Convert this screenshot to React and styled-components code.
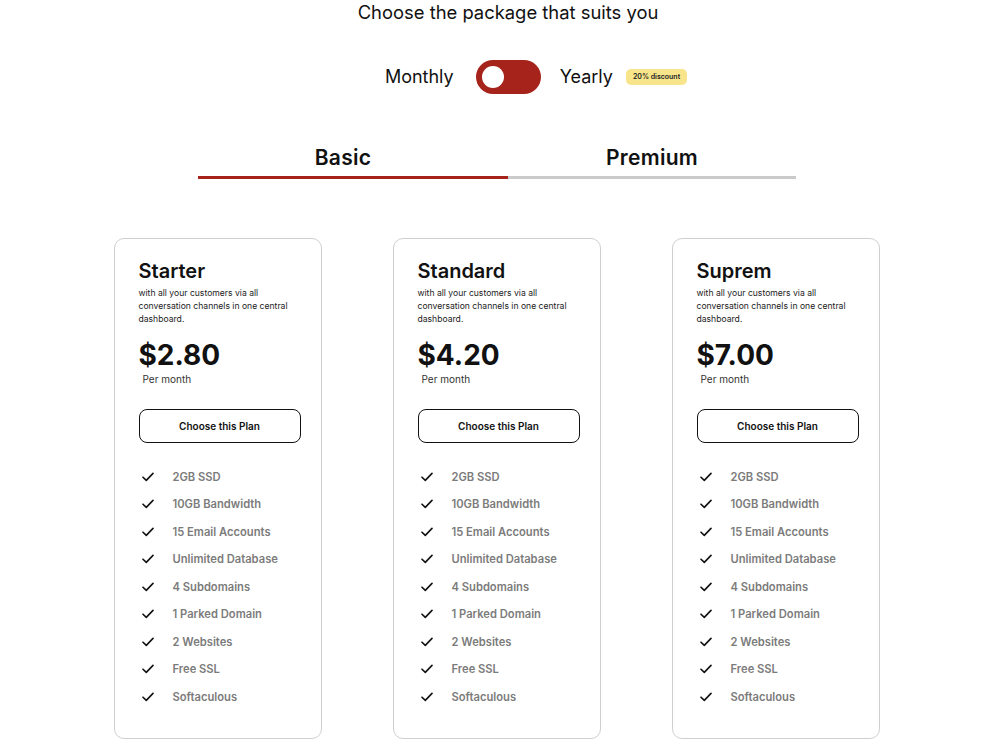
import React, { useState } from 'react'
import styled, { createGlobalStyle } from 'styled-components'

const GlobalStyle = createGlobalStyle`
  body {
    margin: 0;
    background: #fff;
    font-family: Inter, "Noto Sans", sans-serif;
    color: #111;
  }
`

const plans = [
  { name: 'Starter', price: '$2.80' },
  { name: 'Standard', price: '$4.20' },
  { name: 'Suprem', price: '$7.00' },
]

const features = [
  '2GB SSD',
  '10GB Bandwidth',
  '15 Email Accounts',
  'Unlimited Database',
  '4 Subdomains',
  '1 Parked Domain',
  '2 Websites',
  'Free SSL',
  'Softaculous',
]

const CheckIcon = () => (
  <svg width="12" height="10" viewBox="0 0 12 10" fill="none">
    <path d="M1 5.2 L4.3 8.4 L11 1.4" stroke="#111" strokeWidth="1.6" strokeLinecap="round" strokeLinejoin="round" />
  </svg>
)

const PlanCard = ({ name, price }) => (
  <Card>
    <PlanName>{name}</PlanName>
    <Description>
      with all your customers via all conversation channels in one central dashboard.
    </Description>
    <Price>{price}</Price>
    <Period>Per month</Period>
    <ChooseButton>Choose this Plan</ChooseButton>
    <FeatureList>
      {features.map((f) => (
        <Feature key={f}>
          <CheckIcon />
          <span>{f}</span>
        </Feature>
      ))}
    </FeatureList>
  </Card>
)

const App = () => {
  const [yearly, setYearly] = useState(false)
  const [tab, setTab] = useState('basic')

  return (
    <Page>
      <GlobalStyle />
      <Heading>Choose the package that suits you</Heading>
      <BillingRow>
        <BillingLabel>Monthly</BillingLabel>
        <Switch onClick={() => setYearly(!yearly)} $on={yearly}>
          <Knob $on={yearly} />
        </Switch>
        <BillingLabel>Yearly</BillingLabel>
        <Discount>20% discount</Discount>
      </BillingRow>
      <Tabs>
        <Tab $active={tab === 'basic'} $width={310} $shift={20} onClick={() => setTab('basic')}>
          Basic
        </Tab>
        <Tab $active={tab === 'premium'} $width={288} onClick={() => setTab('premium')}>
          Premium
        </Tab>
      </Tabs>
      <Cards>
        {plans.map((p) => (
          <PlanCard key={p.name} {...p} />
        ))}
      </Cards>
    </Page>
  )
}

export default App

const Page = styled.div`
  display: flex;
  flex-direction: column;
  align-items: center;
  padding-bottom: 40px;
`

const Heading = styled.h1`
  margin: 0;
  padding-left: 16px;
  font-size: 18.4px;
  line-height: 24px;
  font-weight: 400;
  color: #111;
`

const BillingRow = styled.div`
  display: flex;
  align-items: center;
  margin-top: 36px;
  height: 34px;
  padding-left: 72px;
`

const BillingLabel = styled.span`
  font-size: 18px;
  line-height: 24px;
  color: #111;
`

const Switch = styled.button`
  width: 65px;
  height: 34px;
  margin: 0 19px 0 22px;
  border: none;
  border-radius: 17px;
  background: #a5231a;
  padding: 0 6px;
  display: flex;
  align-items: center;
  justify-content: ${(p) => (p.$on ? 'flex-end' : 'flex-start')};
  cursor: pointer;
`

const Knob = styled.span`
  width: 22px;
  height: 22px;
  border-radius: 50%;
  background: #fff;
`

const Discount = styled.span`
  margin-left: 13px;
  height: 16px;
  padding: 0 7px;
  border-radius: 5px;
  background: #f8e58b;
  font-size: 7px;
  font-weight: 600;
  line-height: 16px;
  color: #222;
`

const Tabs = styled.div`
  display: flex;
  margin-top: 51px;
  margin-left: -6px;
`

const Tab = styled.button`
  width: ${(p) => p.$width}px;
  padding: 0 ${(p) => p.$shift || 0}px 5px 0;
  border: none;
  border-bottom: 3px solid ${(p) => (p.$active ? '#a5231a' : '#cacaca')};
  background: none;
  font-family: inherit;
  font-size: 21px;
  line-height: 26px;
  font-weight: 600;
  letter-spacing: 0.3px;
  color: #111;
  cursor: pointer;
`

const Cards = styled.div`
  display: flex;
  gap: 71px;
  margin-top: 59px;
  padding-right: 7px;
`

const Card = styled.div`
  width: 208px;
  box-sizing: border-box;
  padding: 20px 20px 27px 24px;
  border: 1px solid #cfcfcf;
  border-radius: 10px;
  display: flex;
  flex-direction: column;
`

const PlanName = styled.h2`
  margin: 0;
  font-size: 20px;
  line-height: 24px;
  font-weight: 600;
  color: #111;
`

const Description = styled.p`
  margin: 4px 0 0;
  max-width: 160px;
  font-size: 8.6px;
  line-height: 13px;
  color: #222;
`

const Price = styled.div`
  margin-top: 12px;
  font-size: 28px;
  line-height: 34px;
  font-weight: 700;
  color: #111;
`

const Period = styled.div`
  padding-left: 4px;
  font-size: 10px;
  line-height: 14px;
  color: #333;
`

const ChooseButton = styled.button`
  margin-top: 23px;
  height: 34px;
  border: 1.5px solid #111;
  border-radius: 8px;
  background: #fff;
  font-family: inherit;
  font-size: 10px;
  font-weight: 600;
  color: #111;
  cursor: pointer;
`

const FeatureList = styled.ul`
  list-style: none;
  margin: 20px 0 0;
  padding: 0;
`

const Feature = styled.li`
  display: flex;
  align-items: center;
  gap: 19px;
  height: 27.5px;
  padding-left: 3px;
  font-size: 11.2px;
  font-weight: 600;
  color: #7b7b7b;
`
